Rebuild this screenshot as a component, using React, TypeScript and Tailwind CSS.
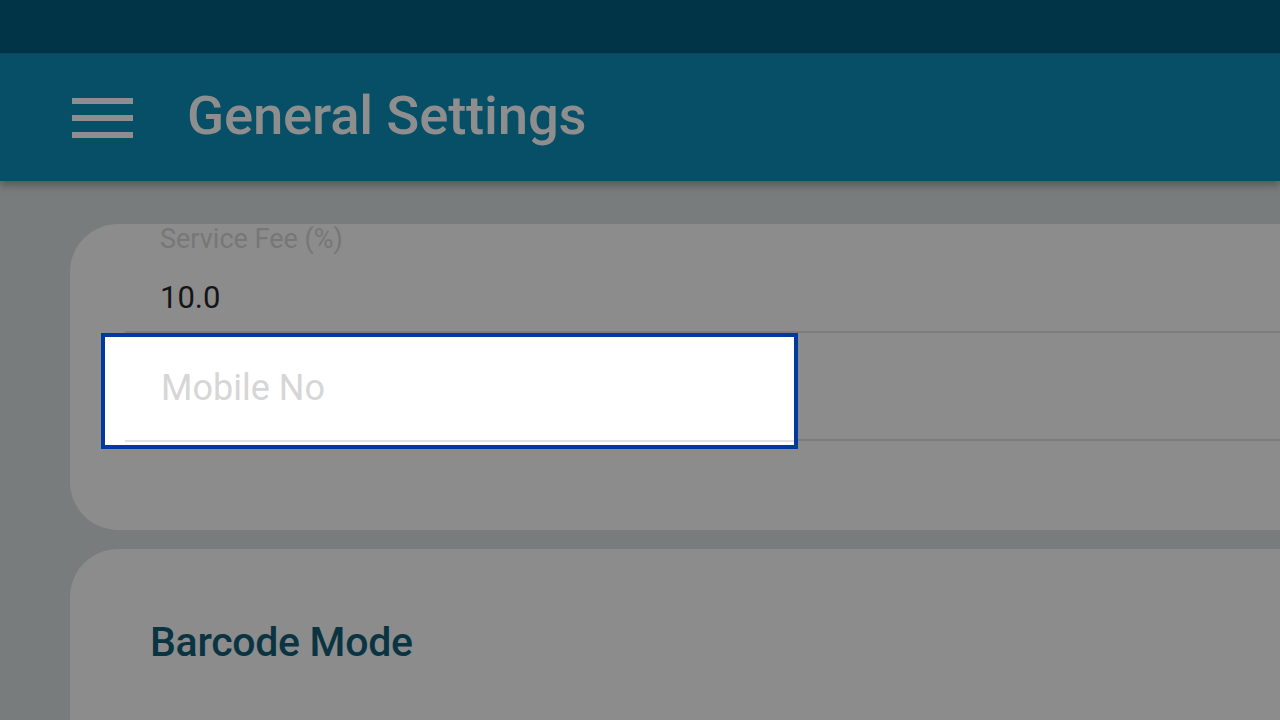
export default function App() {
  const font = { fontFamily: 'Roboto, "Noto Sans", sans-serif' };
  return (
    <div className="relative w-[1280px] h-[720px] overflow-hidden bg-[#787c7d]" style={font}>
      {/* status bar */}
      <div className="h-[54px] bg-[#023447] border-b border-[#0a4a60]" />

      {/* app bar */}
      <header className="relative z-10 h-[127px] bg-[#074f67] flex items-center pl-[72px] shadow-[0_4px_8px_rgba(0,0,0,0.3)]">
        <div className="flex flex-col gap-[11px] w-[61px]">
          <span className="block h-[6px] bg-[#8e8e8e]" />
          <span className="block h-[6px] bg-[#8e8e8e]" />
          <span className="block h-[6px] bg-[#8e8e8e]" />
        </div>
        <h1 className="ml-[54px] text-[54.5px] leading-none font-medium text-[#8e8e8e] tracking-[-0.2px] pb-[4px]">
          General Settings
        </h1>
      </header>

      {/* content */}
      <main className="pl-[70px] pt-[43px] flex flex-col gap-[19px]">
        <section className="w-[1280px] h-[306px] bg-[#8c8c8c] rounded-[48px] pl-[55px] flex flex-col">
          <div className="h-[109px] border-b-2 border-[#7c7c7c] flex flex-col">
            <span className="pl-[35px] text-[27px] leading-[32px] text-[#777777] -mt-[1px]">Service Fee (%)</span>
            <span className="pl-[35px] mt-[25px] text-[31px] leading-[36px] text-[#151515]">10.0</span>
          </div>
          <div className="h-[108px] border-b-2 border-[#7c7c7c]" />
        </section>

        <section className="w-[1280px] h-[220px] bg-[#8c8c8c] rounded-[48px] pl-[80px] pt-[68px]">
          <h2 className="text-[41px] leading-[50px] font-medium text-[#0a3442] tracking-[-0.3px]">Barcode Mode</h2>
        </section>
      </main>

      {/* highlighted field */}
      <div className="absolute left-[101px] top-[333px] w-[697px] h-[116px] border-4 border-[#0039a0] bg-white">
        <div className="absolute left-[20px] right-0 top-[103px] h-[2px] bg-[#e2e2e2]" />
        <span className="absolute left-[56px] top-[29px] text-[36px] leading-[44px] text-[#d6d6d6]">Mobile No</span>
      </div>
    </div>
  );
}
